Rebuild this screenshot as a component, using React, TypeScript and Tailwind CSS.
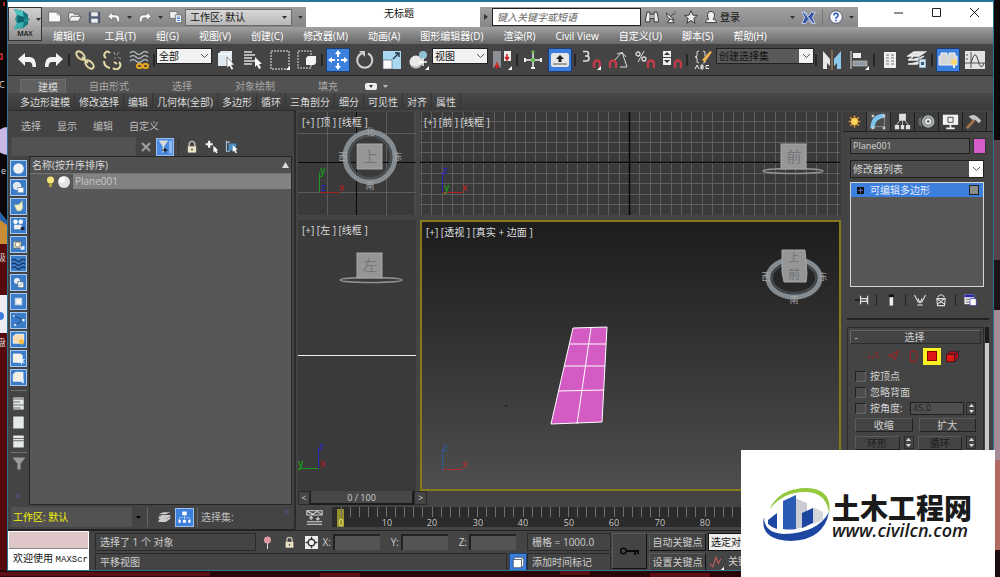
import React from 'react';
import clsx from 'clsx';

type IconProps = { size?: number; children: React.ReactNode };

const Svg = ({ size = 20, children }: IconProps) => (
  <svg width={size} height={size} viewBox="0 0 20 20" fill="none" className="shrink-0">
    {children}
  </svg>
);

const Magnet = () => (
  <path d="M13 18v-4.500a3 3 0 0 1 6 0V18" stroke="#c43a48" strokeWidth="2.400" />
);

const Corner = () => <path d="M20 16v4h-4z" fill="#fff" />;

// all glyphs are drawn on a 20x20 grid
const icons = {
  undo: <path d="M1 9l7-6v4h5q6 0 6 10h-3.500q0-5-3.500-5H8v4z" fill="#f2f2f2" />,
  redo: <path d="M19 9l-7-6v4H7q-6 0-6 10h3.500q0-5 3.500-5h4v4z" fill="#f2f2f2" />,
  link: (
    <g stroke="#e6dba6" strokeWidth="2">
      <ellipse cx="5.500" cy="5.500" rx="5" ry="3" transform="rotate(45 5.500 5.500)" />
      <ellipse cx="14.500" cy="14.500" rx="5" ry="3" transform="rotate(45 14.500 14.500)" />
      <path d="M7 7l6 6" />
    </g>
  ),
  unlink: (
    <>
      <g stroke="#e6dba6" strokeWidth="2">
        <path d="M8 3Q5 0 3 3T4 8M17 12q3 3 0 6t-6 0" />
        <path d="M2 11q0 6 6 7M12 12l3 2" />
      </g>
      <path d="M12 2l1 3M17 2l-2 3M12 8h2M16 7l3 2" stroke="#999" />
    </>
  ),
  bind: (
    <>
      <path d="M1 3q3-3 6 0t6 0 6 0M1 7q3-3 6 0t6 0 6 0M1 11q3-3 6 0t6 0 6 0" stroke="#a9b2b8" strokeWidth="1.600" />
      <rect x="8" y="14" width="5" height="4" rx="2" stroke="#e8a81c" strokeWidth="2" />
      <rect x="14" y="14" width="5" height="4" rx="2" stroke="#e8a81c" strokeWidth="2" />
    </>
  ),
  pick: (
    <>
      <path d="M2 4l3-3h11v12l-3 3H2z" fill="#dfe8ee" />
      <path d="M2 4h11v12M13 4l3-3" stroke="#fff" />
      <path d="M11 7v11l2.500-2 2 4 2-1-2-4h3z" fill="#fff" stroke="#444" strokeWidth=".6" />
    </>
  ),
  byName: (
    <>
      <path d="M1 2h8M1 5h11M1 8h8M1 11h11M1 14h8" stroke="#ddd" strokeWidth="1.500" />
      <path d="M12 7v10l2-2 2 4 2-1-2-4h3z" fill="#fff" />
    </>
  ),
  region: (
    <>
      <rect x="1" y="1" width="18" height="18" stroke="#eee" strokeDasharray="2 1" />
      <Corner />
    </>
  ),
  crossing: (
    <>
      <rect x="1" y="1" width="13" height="17" stroke="#ddd" strokeDasharray="2 1" />
      <path d="M9 8l2-2h8v7l-2 2H9z" fill="#f4f4f4" />
    </>
  ),
  move: (
    <path d="M10 0l3 4h-2v3H9V4H7zM10 20l3-4h-2v-3H9v3H7zM0 10l4-3v2h3v2H4v2zM20 10l-4-3v2h-3v2h3v2zM9 9h2v2H9z" fill="#fff" />
  ),
  rotate: (
    <>
      <path d="M13 3.500A7.500 7.500 0 1 1 6.500 3.500" stroke="#cfcfcf" strokeWidth="2" />
      <path d="M4 1h6v6z" fill="#cfcfcf" />
    </>
  ),
  scale: (
    <>
      <rect x="1" y="1" width="18" height="18" fill="#a9d8ee" />
      <rect x="1" y="10" width="9" height="9" fill="#fafafa" stroke="#557" strokeWidth=".6" />
      <path d="M11 9l6-6M13 3h4v4" stroke="#234" strokeWidth="1.400" />
    </>
  ),
  place: (
    <>
      <circle cx="7" cy="12" r="6.500" fill="#e9e9e9" />
      <path d="M3 16q5 3 9-1" stroke="#999" />
      <circle cx="14" cy="5" r="4" fill="#8fc3d3" />
      <path d="M14 8v8M10 12h8" stroke="#fff" strokeWidth="1.500" />
      <Corner />
    </>
  ),
  pivot: (
    <>
      <path d="M1 1h8v17l-4-3-4 3z" fill="#8d9196" />
      <path d="M12 1h7v10h-7z" fill="#ececec" />
      <path d="M5 12v5M3 15l2 3 2-3M15 4v5M13 7l2 3 2-3" stroke="#c22" strokeWidth="1.500" />
      <Corner />
    </>
  ),
  manipulate: (
    <>
      <path d="M10 2v16M2 10h16" stroke="#eee" strokeWidth="1.500" />
      <path d="M8 8h4v4H8z" fill="#6db85c" />
      <circle cx="10" cy="2" r="1.700" fill="#6db85c" />
      <path d="M8 17h4v2H8zM1 8v4h2V8zM17 8v4h2V8z" fill="#eee" />
    </>
  ),
  keyboard: (
    <>
      <rect x="1" y="3" width="18" height="14" rx="2" fill="#e6e6e6" />
      <path d="M3 14h14" stroke="#555" />
      <path d="M10 5l4 4h-2.500v3h-3V9H6z" fill="#222" />
    </>
  ),
  snap3: (
    <>
      <path d="M2 1.500h3.500q2 0 2 2.200t-2 2.300H4h1.500q2.500 0 2.500 2.500T5.500 11H2" stroke="#ddd" strokeWidth="1.600" />
      <Magnet />
      <Corner />
    </>
  ),
  snapAngle: (
    <>
      <path d="M7 10L14 2l5 15h-7M9 4q6-3 9 3" stroke="#ddd" />
      <path d="M2 18v-4.500a3 3 0 0 1 6 0V18" stroke="#c43a48" strokeWidth="2.400" />
    </>
  ),
  snapPercent: (
    <>
      <circle cx="3" cy="4" r="2" stroke="#ddd" strokeWidth="1.300" />
      <circle cx="9" cy="9" r="2" stroke="#ddd" strokeWidth="1.300" />
      <path d="M9 1L3 12" stroke="#ddd" />
      <Magnet />
    </>
  ),
  snapSpinner: (
    <>
      <path d="M1 1h8v6H1zM1 8h8v7H1z" fill="#eee" />
      <path d="M5 2l3 3H2zM5 13l3-3H2z" fill="#333" />
      <Magnet />
    </>
  ),
  namedSets: (
    <>
      <path d="M6 1Q3 1 4 4t-2 3q3 0 2 3t2 3M10 1q3 0 2 3t2 3q-3 0-2 3t-2 3" stroke="#ddd" />
      <path d="M9 10l8-9 2 1-7 10z" fill="#f0b350" />
      <path d="M2 19l2-4 2 4M8 15v4h2v-2H8h2v-2zM16 15.500h-3v3h3" stroke="#eee" />
    </>
  ),
  mirror: (
    <>
      <path d="M1 1l7 8v7l-3-3v6H1z" fill="#e8e8e8" />
      <path d="M19 1l-7 8v7l3-3v6h4z" fill="#8dc8e8" />
      <path d="M10 0v20" stroke="#b48a60" />
    </>
  ),
  align: (
    <>
      <path d="M2 1v18" stroke="#ddd" />
      <rect x="4" y="3" width="8" height="5" fill="#eee" />
      <rect x="4" y="11" width="14" height="5" fill="#8f9aa6" stroke="#ccc" strokeWidth=".6" />
      <Corner />
    </>
  ),
  layerList: (
    <>
      <rect x="4" y="2" width="12" height="16" fill="#f0f0f0" />
      <path d="M6 5h3M6 8h3M6 11h3M6 14h3M11 5h3M11 8h3M11 11h3M11 14h3" stroke="#777" />
    </>
  ),
  layers: (
    <>
      <path d="M1 6l6-4h11l-6 4zM1 10l5-3M1 10h10l6-4M1 14h9l6-4" stroke="#eee" strokeWidth="1.400" fill="#e2e2e2" />
      <rect x="12" y="9" width="7" height="9" fill="#cfe6f5" stroke="#456" strokeWidth=".7" />
      <path d="M14 12h3v3h-3z" fill="#357" />
    </>
  ),
  ribbon: (
    <>
      <path d="M1 6h2V3h6v3h2V3h6v3h2v9H1z" fill="#d4d6d8" stroke="#f3f3f3" />
      <circle cx="16" cy="12" r="3" fill="#f6d873" />
      <path d="M15 15h2v3h-2z" fill="#eee" />
    </>
  ),
  curves: (
    <>
      <rect x="0" y="1" width="20" height="18" fill="#e3e3e3" />
      <path d="M6 2v16M0 13h20M2 4v2M2 8v2" stroke="#555" />
      <path d="M6 13Q10-2 13 10t6 3" stroke="#444" />
    </>
  ),
  lock: (
    <>
      <path d="M6 10V6a4 4 0 0 1 8 0v4" stroke="#c9c4b0" strokeWidth="2" />
      <rect x="4" y="9" width="12" height="9" fill="#ece2c4" />
      <path d="M10 12v3" stroke="#554" strokeWidth="2" />
    </>
  ),
  page: (
    <>
      <path d="M1 3h12l5 4v10H1z" fill="#fafafa" stroke="#555" />
      <path d="M13 3v4h5" stroke="#777" />
    </>
  ),
  folder: <path d="M1 16V4h6l2 2h7v3M1 16L5 9h14l-4 7z" fill="#f3f3f3" stroke="#444" />,
  save: (
    <>
      <path d="M2 2h16v16H2z" fill="#59657d" stroke="#39435a" />
      <path d="M5 2h10v6H5zM5 12h10v6H5z" fill="#eee" />
    </>
  ),
  project: (
    <>
      <path d="M1 2h8l3 2v8H1z" fill="#eee" stroke="#555" />
      <path d="M9 7h9v11H9z" fill="#fff" stroke="#556" />
      <path d="M11 10h5M11 12h5M11 15h5" stroke="#4a7ed0" strokeWidth="1.500" />
    </>
  ),
  miniUndo: <path d="M1 9l7-6v4h5q6 1 5 8-1 3-4 2 1-6-3-6H8v4z" fill="#fafafa" stroke="#666" />,
  miniRedo: <path d="M19 9l-7-6v4H7q-6 1-5 8 1 3 4 2-1-6 3-6h3v4z" fill="#fafafa" stroke="#666" />,
  binoculars: (
    <>
      <path d="M3 3h4v3h6V3h4l2 9v5h-6v-5H7v5H1v-5z" fill="#f0f0f0" stroke="#333" strokeWidth="1.400" />
      <path d="M7 6v6M13 6v6M10 7v4" stroke="#333" />
    </>
  ),
  dish: (
    <>
      <path d="M2 3q1 11 12 10zM8 12l-4 6h10l-3-5M9 8l6-5" fill="#f0f0f0" stroke="#333" strokeWidth="1.400" />
      <circle cx="15" cy="3" r="1.500" fill="#fff" stroke="#333" />
    </>
  ),
  star: (
    <path d="M10 1l2.700 6.300 6.300.5-5 4.200 1.800 7L10 15l-5.800 4L6 12 1 7.800l6.300-.5z" fill="#eee" stroke="#333" strokeWidth="1.400" />
  ),
  user: (
    <path d="M2 18q0-4 5-5-2-2-2-6 0-5 5-5t5 5q0 4-2 6 5 1 5 5z" fill="#f0f0f0" stroke="#333" strokeWidth="1.300" />
  ),
  exchange: (
    <>
      <path d="M1 3h5l4 5 4-5h5l-4 7 4 8h-5l-4-5-4 5H1l4-8z" fill="#3454a4" stroke="#dfe5f5" strokeWidth="1" />
      <path d="M4 3l12 15" stroke="#cfd8ee" strokeWidth="1.500" />
    </>
  ),
  help: (
    <>
      <circle cx="10" cy="10" r="9" fill="#f6f8fc" stroke="#446" strokeWidth="1.200" />
      <path d="M7 8q0-3.500 3-3.500T13 8q0 1.500-3 3v1.500M10 14v2" stroke="#2b57c0" strokeWidth="2.200" />
    </>
  ),
};

const Chevron = () => (
  <svg width="9" height="6" viewBox="0 0 9 6" fill="none">
    <path d="M1 1l3.500 3.500L8 1" stroke="#555" />
  </svg>
);

const Caret = ({ className = 'text-[#333]' }: { className?: string }) => (
  <svg width="5" height="3" viewBox="0 0 5 3" className={clsx('shrink-0', className)}>
    <path d="M0 0h5L2.500 3z" fill="currentColor" />
  </svg>
);

const Tool = ({ label, active, children }: { label: string; active?: boolean; children: React.ReactNode }) => (
  <button aria-label={label} className="flex w-[27px] shrink-0 items-center justify-center">
    <span className={clsx('flex size-6 items-center justify-center', active && 'border border-[#1d3f73] bg-[#3c7fdc]')}>
      <Svg>{children}</Svg>
    </span>
  </button>
);

const Sep = () => (
  <span className="flex w-1 shrink-0 items-center justify-center">
    <span className="h-3 w-0.5 bg-[#262626]" />
  </span>
);

const ToolSelect = ({ label, value, className }: { label: string; value: string; className: string }) => (
  <div className={clsx('relative mt-1 h-4 shrink-0 self-start border border-[#222]', className)}>
    <select aria-label={label} className="block h-full w-full appearance-none pl-0.5 text-[10px] leading-[14px]">
      <option>{value}</option>
    </select>
    <span className="pointer-events-none absolute inset-y-0 right-0 flex w-3.5 items-center justify-center bg-[#f2f2f2]">
      <Chevron />
    </span>
  </div>
);

const menus = [
  '编辑(E)', '工具(T)', '组(G)', '视图(V)', '创建(C)', '修改器(M)', '动画(A)',
  '图形编辑器(D)', '渲染(R)', 'Civil View', '自定义(U)', '脚本(S)', '帮助(H)',
];

const Header = () => (
  <header className="flex shrink-0 bg-white">
    <div className="flex w-[34px] shrink-0 flex-col bg-linear-to-b from-white from-60% to-[#6c6c6c] to-60%">
      <button className="mt-[7px] flex h-[34px] flex-col items-center border border-[#333] bg-linear-to-b from-[#d2d2d2] to-[#8e8e8e]">
        <span className="flex items-center gap-1 pl-1">
          <svg width="19" height="22" viewBox="0 0 19 22">
            <path d="M1 1l9 2 5 4v3l2 1-2 2v3l-5 4-9 1 3-6-2-4 2-4z" fill="#1f8f94" />
            <path d="M1 1l9 2 1 6-7-2z" fill="#4cc3c0" />
            <path d="M4 7l7 2v5l-7 1 1-4z" fill="#0f6570" />
            <path d="M1 21l9-2 1-5-7 1z" fill="#3ab0ae" />
            <path d="M10 3l5 4v3l-4 1zM11 14l4-1v3l-5 4z" fill="#157680" />
          </svg>
          <Caret />
        </span>
        <span className="text-[7px] leading-[8px] font-semibold text-[#111]">MAX</span>
      </button>
    </div>
    <div className="min-w-0 flex-1">
      <div className="flex h-[27px] pt-[7px] text-[10px]">
        <div className="flex w-[264px] shrink-0 items-center gap-1.5 bg-linear-to-b from-[#9c9c9c] to-[#858585] pl-1.5">
          <button aria-label="新建"><Svg size={14}>{icons.page}</Svg></button>
          <button aria-label="打开"><Svg size={14}>{icons.folder}</Svg></button>
          <button aria-label="保存"><Svg size={13}>{icons.save}</Svg></button>
          <button aria-label="撤消"><Svg size={14}>{icons.miniUndo}</Svg></button>
          <Caret />
          <button aria-label="重做"><Svg size={14}>{icons.miniRedo}</Svg></button>
          <Caret />
          <button aria-label="项目"><Svg size={14}>{icons.project}</Svg></button>
          <div className="relative -ml-1 h-[17px] w-[107px] border border-[#6a6a6a] bg-linear-to-b from-[#d8d8d8] to-[#b8b8b8]">
            <select aria-label="工作区" className="block h-full w-full appearance-none pl-1 text-[10px] leading-[15px] text-[#111]">
              <option>工作区: 默认</option>
            </select>
            <span className="pointer-events-none absolute inset-y-0 right-1 flex items-center"><Caret /></span>
          </div>
          <Caret />
        </div>
        <h1 className="flex-1 pl-3 text-center leading-3 text-[#111]">无标题</h1>
        <div className="flex w-[378px] shrink-0 items-center bg-linear-to-b from-[#a2a2a2] to-[#858585]">
          <button aria-label="展开" className="flex w-3 justify-center">
            <svg width="4" height="6"><path d="M0 0l4 3-4 3z" fill="#333" /></svg>
          </button>
          <input
            aria-label="搜索"
            placeholder="键入关键字或短语"
            className="h-[18px] w-[149px] border border-[#222] bg-white px-1 italic placeholder:text-[#666]"
          />
          <div className="flex items-center gap-1.5 pl-1">
            <button aria-label="查找"><Svg size={14}>{icons.binoculars}</Svg></button>
            <button aria-label="通讯"><Svg size={13}>{icons.dish}</Svg></button>
            <button aria-label="收藏"><Svg size={14}>{icons.star}</Svg></button>
            <button className="flex items-center gap-0.5 leading-3 text-[#111]">
              <Svg size={14}>{icons.user}</Svg>登录
            </button>
          </div>
          <div className="ml-auto flex items-center gap-1.5 pr-1">
            <Caret />
            <button aria-label="Exchange"><Svg size={15}>{icons.exchange}</Svg></button>
            <span className="h-4 w-px bg-[#777]" />
            <button aria-label="帮助"><Svg size={14}>{icons.help}</Svg></button>
            <Caret />
          </div>
        </div>
        <div className="-mt-[3px] flex w-[135px] shrink-0 justify-end">
          {['M0 5h9', 'M.5 .5h8v8h-8z', 'M0 0l9 9M9 0l-9 9'].map((d, i) => (
            <button key={d} aria-label={['最小化', '最大化', '关闭'][i]} className="flex w-[38px] justify-center pt-1">
              <svg width="9" height="9"><path d={d} fill="none" stroke="#222" /></svg>
            </button>
          ))}
        </div>
      </div>
      <nav className="flex h-[17px] items-center gap-5 bg-linear-to-b from-[#a0a0a0] to-[#686868] pl-[11px] text-[10px] leading-4 whitespace-nowrap text-white">
        {menus.map((m) => <button key={m}>{m}</button>)}
      </nav>
    </div>
  </header>
);

const Toolbar = () => (
  <div className="flex h-8 shrink-0 border-b border-[#222] bg-[#444] pl-[5px]">
    <Tool label="撤消">{icons.undo}</Tool>
    <Tool label="重做">{icons.redo}</Tool>
    <Sep />
    <Tool label="链接">{icons.link}</Tool>
    <Tool label="断开链接">{icons.unlink}</Tool>
    <Tool label="绑定到空间扭曲">{icons.bind}</Tool>
    <Sep />
    <ToolSelect label="选择过滤器" value="全部" className="w-14 bg-[#f2f2f2] text-[#111]" />
    <Tool label="选择对象">{icons.pick}</Tool>
    <Tool label="按名称选择">{icons.byName}</Tool>
    <Tool label="选择区域">{icons.region}</Tool>
    <Tool label="窗口/交叉">{icons.crossing}</Tool>
    <Sep />
    <Tool label="移动" active>{icons.move}</Tool>
    <Tool label="旋转">{icons.rotate}</Tool>
    <Tool label="缩放">{icons.scale}</Tool>
    <Tool label="放置">{icons.place}</Tool>
    <ToolSelect label="参考坐标系" value="视图" className="w-14 bg-[#f2f2f2] text-[#111]" />
    <Tool label="轴点中心">{icons.pivot}</Tool>
    <Sep />
    <Tool label="操纵">{icons.manipulate}</Tool>
    <Tool label="键盘快捷键" active>{icons.keyboard}</Tool>
    <Sep />
    <Tool label="捕捉">{icons.snap3}</Tool>
    <Tool label="角度捕捉">{icons.snapAngle}</Tool>
    <Tool label="百分比捕捉">{icons.snapPercent}</Tool>
    <Tool label="微调器捕捉">{icons.snapSpinner}</Tool>
    <Sep />
    <Tool label="编辑命名选择集">{icons.namedSets}</Tool>
    <ToolSelect label="命名选择集" value="创建选择集" className="w-[98px] bg-[#5a5a5a] text-[#111]" />
    <Sep />
    <Tool label="镜像">{icons.mirror}</Tool>
    <Tool label="对齐">{icons.align}</Tool>
    <Sep />
    <Tool label="层列表">{icons.layerList}</Tool>
    <Tool label="层管理器">{icons.layers}</Tool>
    <Sep />
    <Tool label="功能区" active>{icons.ribbon}</Tool>
    <Tool label="曲线编辑器">{icons.curves}</Tool>
  </div>
);

const ribbonPanels = ['多边形建模', '修改选择', '编辑', '几何体(全部)', '多边形', '循环', '三角剖分', '细分', '可见性', '对齐', '属性'];

const Ribbon = () => (
  <div className="shrink-0 text-[10px] whitespace-nowrap">
    <div className="flex h-[17px] items-end gap-[43px] bg-[#525252] pl-3 leading-[14px] text-[#a8a8a8]">
      <button className="-mr-5 h-[14px] w-[46px] border border-b-0 border-[#6c6c6c] bg-[#616161] pl-2.5 leading-3 text-[#d8d8d8]">建模</button>
      <button>自由形式</button>
      <button>选择</button>
      <button>对象绘制</button>
      <button>填充</button>
      <button aria-label="最小化功能区" className="-ml-4 flex h-[14px] items-center gap-1.5">
        <svg width="12" height="7"><rect width="12" height="7" rx="2" fill="#eee" /><path d="M4 2h4L6 5z" fill="#333" /></svg>
        <Caret className="text-[#bbb]" />
      </button>
    </div>
    <div className="flex h-[17px] bg-linear-to-b from-[#484848] to-[#3a3a3a] pl-2 text-[#dcdcdc]">
      {ribbonPanels.map((p) => (
        <button key={p} className="border-r border-[#363636] px-1 leading-4">{p}</button>
      ))}
    </div>
  </div>
);

const filterGlyphs = [
  <circle cx="10" cy="10" r="7" fill="#eef1f3" />,
  <><circle cx="8" cy="8" r="5" fill="#dfe8ee" stroke="#fff" /><path d="M9 10h8v7H9z" fill="#fff" stroke="#68a" /></>,
  <path d="M4 8l7-1 4-5 1 10-3 4H8z" fill="#f3f0c8" stroke="#8a9" />,
  <><circle cx="6" cy="5" r="3" fill="#fff" /><circle cx="13" cy="5" r="3" fill="#fff" /><path d="M4 9h10v6H4z" fill="#eee" /><path d="M13 12h5v4h-5z" fill="#224" /></>,
  <><path d="M3 6h11v9H3z" fill="#e2e2d6" stroke="#567" /><circle cx="9" cy="10" r="3.500" fill="#fffbe0" stroke="#665" /><path d="M15 12h3v5h-6z" fill="#def" /></>,
  <path d="M1 6q3-3 6 0t6 0 6 0M1 11q3-3 6 0t6 0 6 0M1 16q3-3 6 0t6 0 6 0" stroke="#17375f" strokeWidth="1.500" />,
  <><circle cx="8" cy="8" r="4" fill="#eee" /><path d="M9 9h8v8H9z" fill="#fff" stroke="#357" /><path d="M11 15l4-4" stroke="#357" /></>,
  <path d="M6 6h8v8H6z" fill="#fdf5f0" stroke="#c9d6e8" strokeWidth="2" />,
  <><path d="M4 4l12 5-10 7" stroke="#17375f" /><path d="M3 3h2v2H3zM15 8h3v3h-3zM4 15h3v2H4z" fill="#fff" /></>,
  <><path d="M3 6l3-3h11v9l-3 3H3z" fill="#f6dcae" stroke="#fff" /><circle cx="14" cy="13" r="3.500" fill="#f5bf4a" /></>,
  <><path d="M3 4h10l2 2v9H3z" fill="#f5f2e6" stroke="#fff" /><path d="M14 9v9M10 11l8 5M18 11l-8 5" stroke="#e8f4ff" strokeWidth="1.500" /></>,
  <><path d="M3 6l3-3h10v10l-3 2H3z" fill="#f3efe0" stroke="#fff" /><path d="M13 12h4v6l-4-2z" fill="#dceeff" /></>,
];

const SceneExplorer = () => (
  <aside className="flex w-72 shrink-0 flex-col border-t border-r-2 border-[#2c2c2c] bg-[#444] text-[10px] text-[#bdbdbd]">
    <nav className="flex h-[26px] items-center gap-4 pt-1 pl-[13px]">
      {['选择', '显示', '编辑', '自定义'].map((t) => <button key={t}>{t}</button>)}
    </nav>
    <div className="flex h-[19px] items-center pl-[3px]">
      <input aria-label="查找" className="h-full w-[125px] border border-[#4e4e4e] bg-[#525252]" />
      <button aria-label="清除" className="flex w-5 justify-center">
        <svg width="10" height="10"><path d="M1 1l8 8M9 1L1 9" stroke="#a0a0a0" strokeWidth="2" /></svg>
      </button>
      <button aria-label="过滤器" className="flex h-[18px] w-[18px] items-center justify-center border border-[#9bc0f0] bg-[#4a8ae0]">
        <Svg size={16}>
          <path d="M2 2h12L9 9v8H7V9z" fill="#d9d9d9" />
          <path d="M7 14h6M10 11v6" stroke="#111" strokeWidth="1.500" />
          <path d="M15 2h4v16h-4z" fill="#8fb8ee" />
        </Svg>
      </button>
      <span className="mx-1 h-4 w-px bg-[#333]" />
      <div className="flex items-center gap-1.5 pl-0.5">
        <button aria-label="锁定"><Svg size={14}>{icons.lock}</Svg></button>
        <button aria-label="添加">
          <Svg size={14}><path d="M1 6h10M6 1v10" stroke="#fff" strokeWidth="3" /><path d="M12 8v10l2-2 2 3 2-1-2-3h3z" fill="#fff" /></Svg>
        </button>
        <button aria-label="选择子对象">
          <Svg size={14}><path d="M2 1v15h5M2 3h5" stroke="#a9c6de" strokeWidth="1.500" /><path d="M5 5h11v10H5z" fill="#4b8fc4" /><path d="M11 7v10l2-2 2 4 2-1-2-4h3z" fill="#fff" /></Svg>
        </button>
      </div>
    </div>
    <div className="flex min-h-0 flex-1">
      <div className="flex w-[21px] shrink-0 flex-col items-center gap-0.5 pt-1">
        {filterGlyphs.map((g, i) => (
          <button key={i} aria-label={`显示类别 ${i + 1}`} className="flex size-[17px] shrink-0 items-center justify-center border border-[#a8c8ee] bg-[#3b7cc9]">
            <Svg size={15}>{g}</Svg>
          </button>
        ))}
        <span className="my-0.5 h-px w-4 shrink-0 bg-[#707070]" />
        {['M3 4h14M3 8h9M3 12h14M3 16h10', '', 'M3 6h14M3 9h14'].map((d, i) => (
          <button key={i} aria-label={`列表 ${i + 1}`} className="flex h-[17px] shrink-0 items-center">
            <Svg size={15}><path d="M3 2h14v16H3z" fill="#e6e9e9" /><path d={d} stroke="#666" strokeWidth="1.300" /></Svg>
          </button>
        ))}
        <span className="h-px w-4 shrink-0 bg-[#707070]" />
        <button aria-label="按类别过滤"><Svg size={16}><path d="M2 3h16l-6 8v7H8v-7z" fill="#9a9a9a" /></Svg></button>
        <span className="mt-4 leading-3 text-[#55558a]">»</span>
      </div>
      <div className="mr-0.5 flex flex-1 flex-col border border-[#262626] bg-[#575757]">
        <div className="flex h-[17px] items-center justify-between border-b border-[#747474] bg-[#505050] px-0.5 text-[#d6d6d6]">
          <span className="leading-4">名称(按升序排序)</span>
          <svg width="7" height="6"><path d="M3.500 0L7 6H0z" fill="#ddd" /></svg>
        </div>
        <div className="flex h-[15px] items-center pl-4">
          <svg width="9" height="12" viewBox="0 0 9 12"><circle cx="4.500" cy="4" r="3.500" fill="#f6e679" /><path d="M3 7h3v4H3z" fill="#b49a3c" /></svg>
          <svg width="14" height="14" className="ml-0.5"><circle cx="7" cy="7" r="6" fill="#e2e2e2" /><circle cx="5" cy="5" r="3" fill="#fff" /></svg>
          <span className="ml-0.5 h-full flex-1 bg-[#828282] pl-0.5 leading-[15px] text-[#c6c6c6]">Plane001</span>
        </div>
      </div>
    </div>
    <div className="flex h-[25px] shrink-0 items-center border-b border-[#222] pl-[3px]">
      <div className="mr-2 h-5 w-[121px] bg-[#525252]">
        <select aria-label="工作区" className="block h-full w-full appearance-none pl-0.5 text-[10px] text-[#f2f200]">
          <option>工作区: 默认</option>
        </select>
      </div>
      <Caret className="-ml-1 text-black" />
      <span className="mx-1.5 h-5 w-px bg-[#666]" />
      <button aria-label="层" className="px-1"><Svg size={13}><path d="M1 5l7-3h11l-7 3zM1 9l4-2v-1h14v2l-7 4H1zM1 14l3-2h9l6-3v3l-7 5H1z" fill="#ccc" /></Svg></button>
      <button aria-label="层次" className="flex size-[19px] items-center justify-center border border-[#9bc0f0] bg-[#3c7fdc]">
        <Svg size={15}><path d="M7 2h6v5H7zM2 13h3v4H2zM8 13h4v4H8zM15 13h3v4h-3z" fill="#fff" /><path d="M10 7v6M3 13v-3h14v3" stroke="#cde" strokeDasharray="2 1" /></Svg>
      </button>
      <span className="mx-[3px] h-5 w-px bg-[#666]" />
      <span>选择集:</span>
      <span className="mr-1 ml-auto self-start leading-3 text-[#55558a]">»</span>
    </div>
  </aside>
);

const range = (from: number, to: number, step: number) =>
  Array.from({ length: Math.ceil((to - from) / step) }, (_, i) => from + i * step);

const Axis = ({ x, y, up, upColor, side, sideColor, dir = 1, own, ownColor }: {
  x: number; y: number; up: string; upColor: string; side: string; sideColor: string; dir?: number; own?: string; ownColor?: string;
}) => (
  <g fontSize="10" fontWeight="600">
    <path d={`M${x}.5 ${y}.5v-20`} stroke={upColor} />
    <path d={`M${x}.5 ${y}.5h${20 * dir}`} stroke={sideColor} />
    <text x={x + 1} y={y - 18} fill={upColor}>{up}</text>
    <text x={dir > 0 ? x + 20 : x - 20} y={y - 1} fill={sideColor}>{side}</text>
    {own && <text x={x + 2} y={y - 1} fill={ownColor}>{own}</text>}
  </g>
);

const Cube = ({ x, y, face }: { x: number; y: number; face: string }) => (
  <g>
    <rect x={x} y={y} width="25" height="25" fill="#969696" stroke="#a8a8a8" />
    <text x={x + 13} y={y + 18} fontSize="15" textAnchor="middle" fill="#74777c">{face}</text>
  </g>
);

const Viewport = ({ label, className, children }: { label: string; className: string; children: React.ReactNode }) => (
  <section aria-label={label} className={clsx('relative min-h-0 overflow-hidden', className)}>
    <svg className="absolute inset-0 h-full w-full" fill="none">{children}</svg>
    <h2 className="relative pt-1 pl-1 text-[10px] leading-3 whitespace-nowrap text-[#dedede]">{label}</h2>
  </section>
);

const Viewports = () => (
  <div className="flex min-h-0 flex-1 flex-col gap-[5px] px-0.5 pt-0.5">
    <div className="flex h-[103px] shrink-0 gap-1">
      <Viewport label="[+] [顶 ] [线框 ]" className="w-[118px] shrink-0 bg-[#3a3a3a]">
        <path d="M29.500 0v103M88.500 0v103M0 21.500h118M0 80.500h118M117 0v103" stroke="#5c5c5c" />
        <path d="M58.500 0v103M0 50.500h118" stroke="#080808" />
        <circle cx="72" cy="45" r="25" stroke="#868d92" strokeWidth="5" />
        <circle cx="72" cy="45" r="21" stroke="#4d5357" strokeWidth="2" />
        <Cube x={59} y={32} face="上" />
        <g fontSize="9" fill="#a4a4a4" textAnchor="middle">
          <text x="72" y="23">北</text><text x="72" y="77">南</text>
          <text x="45" y="48">西</text><text x="100" y="48">东</text>
        </g>
        <Axis x={21} y={80} up="y" upColor="#1c9a1c" side="x" sideColor="#a22424" own="z" ownColor="#2222b8" />
      </Viewport>
      <Viewport label="[+] [前 ] [线框 ]" className="flex-1 bg-[#3a3a3a]">
        <path d={range(1, 420, 10.4).map((x) => `M${Math.round(x)}.5 0v103`).join('')} stroke="#5e5e5e" />
        <path d={range(9, 103, 10.4).map((y) => `M0 ${Math.round(y)}.5h420`).join('')} stroke="#5e5e5e" />
        <path d="M209.500 0v103M0 50.500h420" stroke="#080808" strokeWidth="1.500" />
        <ellipse cx="373" cy="59" rx="30" ry="2.500" stroke="#8f9394" strokeWidth="1.500" />
        <Cube x={361} y={32} face="前" />
        <Axis x={22} y={80} up="z" upColor="#2828b8" side="x" sideColor="#b82424" own="y" ownColor="#1c9a1c" />
      </Viewport>
    </div>
    <div className="flex min-h-0 flex-1 gap-1">
      <Viewport label="[+] [左 ] [线框 ]" className="w-[118px] shrink-0 bg-[#3a3a3a]">
        <path d="M0 135.500h118" stroke="#eee" />
        <ellipse cx="73" cy="60" rx="31" ry="2.500" stroke="#8f9394" strokeWidth="1.500" />
        <Cube x={59} y={33} face="左" />
        <Axis x={20} y={248} up="z" upColor="#2828b8" side="y" sideColor="#1c9a1c" dir={-1} own="x" ownColor="#a22424" />
      </Viewport>
      <Viewport label="[+] [透视 ] [真实 + 边面 ]" className="flex-1 border-2 border-[#857b1c] bg-linear-to-b from-[#1d1d1d] to-[#4e4e4e]">
        <path d="M151 106l34-1-5 95-51 2z" fill="#d45ac4" stroke="#fff" />
        <path d="M169 106l-14 96M147 122h37M142 144h41M136 169l46-1" stroke="#fff" />
        <path d="M83 184h2" stroke="#111" />
        <ellipse cx="372" cy="56" rx="26" ry="19" stroke="#858c91" strokeWidth="5" />
        <ellipse cx="372" cy="56" rx="22" ry="15" stroke="#454b4f" strokeWidth="2" />
        <path d="M360 28h23l2 24-1 8h-22l-2-10z" fill="#969696" stroke="#a8a8a8" />
        <g fill="#6e7176" textAnchor="middle">
          <text x="372" y="39" fontSize="10">上</text>
          <text x="372" y="57" fontSize="12">前</text>
        </g>
        <g fill="#a4a4a4" fontSize="9" textAnchor="middle">
          <text x="372" y="81">南</text><text x="344" y="58">西</text><text x="401" y="58">东</text>
        </g>
        <Axis x={20} y={247} up="z" upColor="#2b5a9a" side="x" sideColor="#a83030" />
      </Viewport>
    </div>
  </div>
);

const Timeline = () => (
  <div className="shrink-0 pb-[3px] text-[#cfcfcf]">
    <div className="flex h-[14px] text-[9px] leading-[14px]">
      <button className="ml-0.5 w-3 border border-[#2a2a2a] leading-3">&lt;</button>
      <div className="w-[104px] border-r-2 border-b-2 border-l border-[#1c1c1c] bg-[#484848] text-center leading-[13px]">0 / 100</div>
      <button className="w-[13px] border border-[#2a2a2a] leading-3">&gt;</button>
    </div>
    <div className="mt-0.5 flex h-5">
      <button aria-label="迷你曲线编辑器" className="flex w-9 items-center justify-center">
        <Svg size={17}><path d="M1 2h18v5H1zM1 18h18M1 15h18M6 9v4M4 11l2-2 2 2M14 9v4M12 11l2 2 2-2M2 3l6 3 5-3 5 3" stroke="#d6d6d6" strokeWidth="1.300" /></Svg>
      </button>
      <svg className="h-full min-w-0 flex-1 bg-[#2b2b2b]" fill="none">
        <rect x="5" y="2" width="7" height="18" fill="#96912c" />
        <path d={range(8.5, 510, 9.1).map((x) => `M${Math.round(x)}.5 0v10`).join('')} stroke="#707070" />
        {range(0, 11, 1).map((n) => (
          <text key={n} x={Math.round(9 + n * 45.5)} y="19" fontSize="9" textAnchor="middle" fill={n ? '#c8c8c8' : '#f2ee80'}>{n * 10}</text>
        ))}
      </svg>
    </div>
  </div>
);

const commandTabs = [
  <><path d="M10 3v14M3 10h14M5 5l10 10M15 5L5 15" stroke="#d98a2c" strokeWidth="2" /><circle cx="10" cy="10" r="4" fill="#ffd45a" /></>,
  <><path d="M3 18Q3 4 17 3" stroke="#7cc4ee" strokeWidth="5" /><path d="M2 2h3v3H2zM15 2h3v3h-3zM15 16h3v3h-3zM2 16h3v3H2z" fill="#ccc" /><path d="M17 5v11H6" stroke="#999" /></>,
  <><path d="M6 1h8v8H6zM1 14h5v5H1zM8 14h4v5H8zM14 14h5v5h-5z" fill="#e0e0e0" /><path d="M10 9v5M3 14l4-5M17 14l-4-5" stroke="#ccc" /></>,
  <><circle cx="12" cy="10" r="6.500" fill="#8d9494" stroke="#b9c0c0" strokeWidth="1.500" /><circle cx="12" cy="10" r="3.500" fill="#eee" /><circle cx="12" cy="10" r="1.500" fill="#555" /><path d="M4 4q-3 6 0 12M2 6q-2 4 0 8" stroke="#888" /></>,
  <><path d="M1 2h18v12H1z" fill="#f2f2f2" /><path d="M7 5h6v6H7z" stroke="#333" /><path d="M5 18h10M10 14v4" stroke="#eee" strokeWidth="2" /></>,
  <><path d="M3 4q6-4 11 1l4 4-3 3-4-4-2 1z" fill="#c5c5c5" /><path d="M10 8L1 18" stroke="#a5764f" strokeWidth="3" /></>,
];

const Check = ({ label }: { label: string }) => (
  <label className="flex h-4 items-center gap-1">
    <input type="checkbox" className="size-[11px] appearance-none border border-[#1f1f1f] border-r-[#666] border-b-[#666] bg-[#4c4c4c]" />
    <span>{label}</span>
  </label>
);

const Spin = () => (
  <span className="flex h-[13px] w-2.5 items-center justify-center border border-[#2a2a2a]">
    <svg width="5" height="9"><path d="M2.500 0L5 3H0zM2.500 9L5 6H0z" fill="#ddd" /></svg>
  </span>
);

const PushButton = ({ children }: { children: React.ReactNode }) => (
  <button className="h-[14px] flex-1 border border-[#5c5c5c] border-r-[#222] border-b-[#222] leading-3">{children}</button>
);

const CommandPanel = () => (
  <aside className="flex w-[150px] shrink-0 flex-col bg-[#444] text-[10px] text-[#d2d2d2]">
    <div className="flex h-[22px] border-b border-[#222] pt-0.5">
      {commandTabs.map((g, i) => (
        <button
          key={i}
          aria-label={['创建', '修改', '层次', '运动', '显示', '实用程序'][i]}
          className={clsx('flex w-6 items-center justify-center border-r border-[#1f1f1f]', i === 1 ? 'bg-[#4c4c4c]' : 'bg-[#3d3d3d]')}
        >
          <Svg size={17}>{g}</Svg>
        </button>
      ))}
    </div>
    <div className="flex flex-col px-[7px] pt-1.5">
      <div className="flex h-4 gap-[3px]">
        <input aria-label="名称" defaultValue="Plane001" className="w-[122px] border border-[#1f1f1f] bg-[#525252] px-0.5 text-[9px]" />
        <button aria-label="对象颜色" className="w-[14px] border border-[#333] bg-[#d65cc8]" />
      </div>
      <div className="relative mt-1.5 mr-0.5 h-[18px] border border-[#1f1f1f]">
        <select aria-label="修改器列表" className="block h-full w-full appearance-none bg-[#4c4c4c] pl-0.5 text-[10px]">
          <option>修改器列表</option>
        </select>
        <span className="pointer-events-none absolute inset-y-0 right-0 flex w-3.5 items-center justify-center bg-white"><Chevron /></span>
      </div>
      <div className="mt-1 mr-0.5 h-[105px] border border-[#d6d6d6] bg-[#575757]">
        <button className="flex h-[14px] w-full items-center bg-[#3c7fdc] pr-1 pl-1.5 text-[#e4eefc]">
          <svg width="7" height="7"><path d="M0 0h7v7H0z" fill="#111" /><path d="M1 3.500h5M3.500 1v5" stroke="#66a" /></svg>
          <span className="ml-1.5 leading-[14px]">可编辑多边形</span>
          <span className="ml-auto size-2.5 border border-[#222] bg-[#8c8c8c]" />
        </button>
      </div>
    </div>
    <div className="mx-1 flex h-[33px] shrink-0 items-center justify-between border-b-2 border-[#222] pr-3 pb-1.5 pl-2">
      <button aria-label="锁定堆栈"><Svg size={14}><path d="M0 10h7" stroke="#111" strokeWidth="2" /><path d="M8 4v12M18 4v12M9 8h8v4H9" stroke="#ddd" strokeWidth="1.800" /></Svg></button>
      <span className="h-3 w-px bg-[#222]" />
      <button aria-label="显示最终结果"><Svg size={14}><path d="M8 5h5v13H8z" fill="#eee" /><path d="M7 2h7v4H7z" fill="#111" /></Svg></button>
      <span className="h-3 w-px bg-[#222]" />
      <button aria-label="使唯一"><Svg size={14}><path d="M2 3l6 11M18 3l-6 11M7 8l3 6 3-6M6 17h8" stroke="#ddd" strokeWidth="1.500" /></Svg></button>
      <button aria-label="移除修改器"><Svg size={14}><path d="M4 8h12l-1 10H5zM5 6q5-7 10 0M4 8l11 8M15 8L5 16" stroke="#ddd" strokeWidth="1.500" /></Svg></button>
      <span className="h-3 w-px bg-[#222]" />
      <button aria-label="配置修改器集"><Svg size={14}><path d="M2 2h14v14H2z" fill="#eee" /><path d="M2 2h14v4H2z" fill="#2a2aa8" /><path d="M4 9h5M4 13h5" stroke="#333" /><path d="M10 8h9v10h-9z" fill="#fff" stroke="#2a2aa8" /></Svg></button>
    </div>
    <div className="flex min-h-0 flex-1 overflow-hidden pt-[7px] pl-1">
      <div className="w-[137px] shrink-0 border border-[#2a2a2a] px-0.5 pt-0.5">
        <button className="flex h-[14px] w-full items-center border border-[#666] border-r-[#2a2a2a] border-b-[#2a2a2a] leading-3">
          <span className="w-2.5">-</span>
          <span className="flex-1 pr-3">选择</span>
        </button>
        <div className="flex h-6 items-center gap-1 pl-[17px]">
          <button aria-label="顶点" className="w-4"><Svg size={14}><path d="M2 10l3 3M8 13l2-2M12 8l3-3M16 9v3" stroke="#a52222" strokeWidth="2" /></Svg></button>
          <button aria-label="边" className="w-4"><Svg size={14}><path d="M2 10l14-7-5 12-3-5z" stroke="#a52222" strokeWidth="1.500" /></Svg></button>
          <button aria-label="边界" className="w-3"><Svg size={14}><path d="M6 3h5l4 6-3 9H6L4 9z" stroke="#a52222" strokeWidth="1.500" /></Svg></button>
          <button aria-label="多边形" className="flex h-[17px] w-[18px] items-center justify-center bg-[#f8f020]">
            <span className="size-2.5 border border-[#800] bg-[#e01818]" />
          </button>
          <button aria-label="元素"><Svg size={15}><path d="M2 7h11v10H2z" fill="#e01818" stroke="#400" /><path d="M2 7l5-4h11l-5 4zM13 7l5-4v9l-5 5z" fill="#b01010" stroke="#224" /></Svg></button>
        </div>
        <div className="flex flex-col px-[5px]">
          <Check label="按顶点" />
          <Check label="忽略背面" />
          <div className="flex items-center">
            <Check label="按角度:" />
            <input aria-label="角度" defaultValue="45.0" className="mr-0.5 ml-auto h-[13px] w-[54px] border border-[#1f1f1f] bg-[#4f4f4f] px-0.5 text-[9px] text-[#222]" />
            <Spin />
          </div>
          <div className="mt-0.5 flex gap-1.5">
            <PushButton>收缩</PushButton>
            <PushButton>扩大</PushButton>
          </div>
          <div className="mt-1 flex gap-1 text-[#1c1c1c]">
            <PushButton>环形</PushButton><Spin />
            <PushButton>循环</PushButton><Spin />
          </div>
        </div>
      </div>
      <div className="ml-px w-1 bg-[#c8c8c8] shadow-[inset_0_16px_0_#1c1c1c]" />
    </div>
  </aside>
);

const Coord = ({ axis }: { axis: string }) => (
  <label className="flex w-[68px] items-center justify-end gap-0.5">
    {axis}:
    <input className="h-4 w-[47px] border-t-2 border-l-2 border-[#222] bg-[#545454]" />
  </label>
);

const StatusBar = () => (
  <footer className="flex h-10 shrink-0 border-t border-[#222] bg-[#444] text-[10px] whitespace-nowrap text-[#cfcfcf]">
    <div className="flex w-[81px] shrink-0 flex-col overflow-hidden border border-white text-[#111]">
      <div className="flex-1 bg-[#dfc6c8]" />
      <div className="flex-1 border-t border-[#888] bg-white pl-1 leading-[18px]">
        欢迎使用 <span className="font-['Liberation_Mono'] text-[9px]">MAXScr</span>
      </div>
    </div>
    <div className="ml-1.5 flex w-[432px] shrink-0 flex-col gap-0.5 pt-0.5">
      <div className="flex h-[18px] items-center">
        <div className="h-full w-[161px] border border-[#2a2a2a] pl-1 leading-4">选择了 1 个 对象</div>
        <button aria-label="提示" className="flex w-[22px] justify-center">
          <svg width="9" height="13"><circle cx="4.500" cy="4" r="3.500" fill="#e49aa6" /><path d="M4.500 7v6" stroke="#ddd" /></svg>
        </button>
        <button aria-label="选择锁定" className="flex w-[22px] justify-center"><Svg size={13}>{icons.lock}</Svg></button>
        <button aria-label="绝对模式" className="flex w-[22px] justify-center">
          <Svg size={13}><path d="M0 0h20v20H0z" fill="#eee" /><circle cx="10" cy="10" r="5" stroke="#333" strokeWidth="2" /><path d="M10 1v5M10 14v5M1 10h5M14 10h5" stroke="#333" strokeWidth="2" /></Svg>
        </button>
        <div className="-ml-2.5 flex"><Coord axis="X" /><Coord axis="Y" /><Coord axis="Z" /></div>
      </div>
      <div className="flex h-[18px] gap-0.5">
        <div className="flex-1 border border-[#2a2a2a] pl-1 leading-4">平移视图</div>
        <button aria-label="隔离" className="flex w-[18px] items-center justify-center border border-[#1d3f73] bg-[#3c7fdc]">
          <Svg size={15}><path d="M3 6l3-3h11v11l-3 3H3z" fill="#fff" stroke="#345" /><path d="M3 6h11v11M14 6l3-3" stroke="#345" /></Svg>
        </button>
      </div>
    </div>
    <div className="flex w-[84px] shrink-0 flex-col gap-0.5 pt-0.5">
      <div className="h-[18px] border border-[#2a2a2a] pl-1 leading-4">栅格 = 1000.0</div>
      <div className="h-[18px] border border-[#2a2a2a] pl-1 leading-4">添加时间标记</div>
    </div>
    <button aria-label="设置关键点" className="mt-0.5 mb-px ml-px flex w-[35px] shrink-0 items-center justify-center border border-[#5a5a5a] border-r-[#111] border-b-[#111]">
      <svg width="20" height="9" fill="none"><circle cx="3.500" cy="4" r="2.800" stroke="#080808" strokeWidth="1.500" /><path d="M6 4h13M15 4v4M18 4v3" stroke="#080808" strokeWidth="2" /></svg>
    </button>
    <div className="ml-0.5 flex w-[57px] shrink-0 flex-col gap-0.5 pt-0.5">
      <button className="h-[18px] border border-[#5a5a5a] border-r-[#111] border-b-[#111] leading-4">自动关键点</button>
      <button className="h-[18px] border border-[#5a5a5a] border-r-[#111] border-b-[#111] leading-4">设置关键点</button>
    </div>
    <div className="ml-0.5 flex w-20 shrink-0 flex-col gap-0.5 pt-0.5">
      <select aria-label="选定对象" className="h-[18px] appearance-none border border-[#111] bg-[#eee] pl-0.5 leading-4 text-[#111]">
        <option>选定对象</option>
      </select>
      <button className="flex h-[18px] items-center gap-1">
        <Svg size={16}><path d="M2 12l4 4L10 4l3 8 3-6" stroke="#b95a5a" strokeWidth="1.500" /><Corner /></Svg>
        关键点过滤器
      </button>
    </div>
  </footer>
);

const Wallpaper = () => (
  <svg className="absolute inset-0 h-full w-full" fill="none" aria-hidden="true">
    <rect width="100%" height="100%" fill="#0b0608" />
    <rect y="243" width="7" height="334" fill="#560a0e" />
    <circle cx="8" cy="141" r="14" fill="#c9b8e6" />
    <path d="M0 212l7 9v23H0z" fill="#c98d36" />
    <path d="M0 212l7 9v4l-7-5z" fill="#2a62b0" />
    <rect y="295" width="7" height="38" fill="#ececf2" />
    <circle cx="0" cy="316" r="4" fill="#3b7de0" />
    <path d="M0 54h2v5H0M4 2v4" stroke="#a22" strokeWidth="2" />
    <rect y="570" width="100%" height="7" fill="#2a0508" />
    <path d="M0 574h210M320 575h40M560 573h30M650 575h60" stroke="#5a1014" strokeWidth="4" />
    <svg x="100%" overflow="visible">
      <rect x="-6" y="140" width="6" height="120" fill="#57434c" />
      <rect x="-6" y="260" width="6" height="50" fill="#1c1217" />
      <rect x="-6" y="310" width="6" height="150" fill="#a58c96" />
      <rect x="-6" y="460" width="6" height="90" fill="#b06a62" />
      <rect x="-6" y="550" width="6" height="27" fill="#1d0c10" />
    </svg>
    <g fontSize="9" fill="#ddd">
      <text x="-1" y="88">C</text><text x="1" y="174">e</text>
      <text x="-3" y="261">圾</text><text x="-3" y="346">盘</text>
    </g>
  </svg>
);

const Watermark = () => (
  <div className="absolute right-[5px] bottom-0 flex h-[127px] w-[254px] items-center bg-white pl-[22px]">
    <svg width="69" height="56" viewBox="0 0 69 56" className="shrink-0">
      <path d="M6 24Q16 2 44 2q26 1 22 26-2-21-22-22Q20 5 6 24z" fill="#94c83d" />
      <path d="M1 31q0 16 20 17 34-1 45-22-5 28-38 29Q-4 54 1 31z" fill="#1d46a0" />
      <path d="M32 12l12 5v24l-12 2z" fill="#c9ccd2" />
      <path d="M50 21l10 5v8l-10 4z" fill="#d3d6db" />
      <path d="M20 15l13-6v34q-7 1-13 0z" fill="#2a5bb4" />
      <path d="M5 34l9-7v16q-6-2-9-5z" fill="#1d46a0" />
      <path d="M39 27l11-5v15l-11 5z" fill="#1d46a0" />
    </svg>
    <div className="mt-2 text-[#1a1a1a]">
      <p className="text-[28px] leading-6 font-black">土木工程网</p>
      <p className="text-[18px] leading-5 font-semibold italic">www.civilcn.com</p>
    </div>
  </div>
);

export default function App() {
  return (
    <div className="relative h-screen w-full overflow-hidden pr-1.5 pb-1.5 pl-[7px] font-['Open_Sans','Noto_Sans_CJK_SC',sans-serif]">
      <Wallpaper />
      <main className="relative flex h-full flex-col overflow-hidden border border-t-2 border-[#2b7396] bg-[#444]">
        <div className="flex min-h-0 flex-1 flex-col">
          <div className="-mt-0.5 border-t-2 border-[#4d8397]">
            <div className="-mt-0.5"><Header /></div>
          </div>
          <Toolbar />
          <Ribbon />
          <div className="flex min-h-0 flex-1">
            <SceneExplorer />
            <div className="flex min-w-0 flex-1 flex-col">
              <Viewports />
              <Timeline />
            </div>
            <CommandPanel />
          </div>
          <StatusBar />
        </div>
      </main>
      <Watermark />
    </div>
  );
}
